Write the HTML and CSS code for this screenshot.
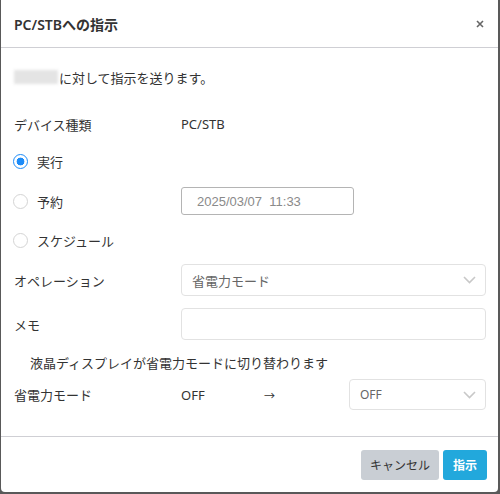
FILE: index.html
```html
<!DOCTYPE html>
<html lang="ja">
<head>
<meta charset="utf-8">
<link rel="stylesheet" href="styles.css">
</head>
<body>
<div class="modal">
  <div class="modal-header">
    <div class="modal-title">PC/STBへの指示</div>
    <button class="close" aria-label="閉じる">
      <svg width="8" height="8" viewBox="0 0 8 8"><path d="M1 1L7 7M7 1L1 7" stroke="#666" stroke-width="1.6" fill="none"/></svg>
    </button>
  </div>
  <div class="modal-body">
    <div class="row intro"><span class="blurred" aria-hidden="true"></span>に対して指示を送ります。</div>
    <div class="row device">
      <div class="label">デバイス種類</div>
      <div class="value">PC/STB</div>
    </div>
    <div class="row radio-row first">
      <label class="radio"><span class="dot checked"></span>実行</label>
    </div>
    <div class="row radio-row reserve">
      <label class="radio label"><span class="dot"></span>予約</label>
      <div class="datetime">2025/03/07&nbsp;&nbsp;11:33</div>
    </div>
    <div class="row radio-row schedule">
      <label class="radio"><span class="dot"></span>スケジュール</label>
    </div>
    <div class="row op">
      <div class="label">オペレーション</div>
      <div class="select wide">
        <span>省電力モード</span>
        <svg class="chev" width="13" height="8" viewBox="0 0 13 8"><path d="M1 1L6.5 6.5L12 1" stroke="#c8c8c8" stroke-width="1.6" fill="none"/></svg>
      </div>
    </div>
    <div class="row memo">
      <div class="label">メモ</div>
      <div class="input wide"></div>
    </div>
    <div class="row note">液晶ディスプレイが省電力モードに切り替わります</div>
    <div class="row power">
      <div class="label">省電力モード</div>
      <div class="cur">OFF</div>
      <div class="arrow">→</div>
      <div class="select small">
        <span>OFF</span>
        <svg class="chev" width="13" height="8" viewBox="0 0 13 8"><path d="M1 1L6.5 6.5L12 1" stroke="#c8c8c8" stroke-width="1.6" fill="none"/></svg>
      </div>
    </div>
  </div>
  <div class="modal-footer">
    <button class="btn cancel">キャンセル</button>
    <button class="btn primary">指示</button>
  </div>
</div>
</body>
</html>
```
FILE: styles.css
```css
html, body {
  margin: 0;
  padding: 0;
}
body {
  width: 500px;
  height: 494px;
  background: #595959;
  font-family: "Noto Sans", "Noto Sans CJK JP", sans-serif;
  font-size: 13px;
  color: #333;
  overflow: hidden;
}
.modal {
  margin-left: 1px;
  width: 497px;
  height: 492px;
  background: #fff;
  border-radius: 0 0 4px 4px;
  display: flex;
  flex-direction: column;
}
.modal-header {
  border-bottom: 1px solid #cfcfd4;
  display: flex;
  align-items: center;
  justify-content: space-between;
  padding: 0 12px 0 13px;
  box-sizing: border-box;
  height: 48px;
}
.modal-title {
  font-size: 14px;
  font-weight: 600;
  color: #333;
}
.close {
  border: none;
  background: none;
  padding: 0;
  width: 12px;
  height: 12px;
  display: flex;
  align-items: center;
  justify-content: center;
}
.modal-body {
  padding: 19px 11px 0 13px;
  flex: 1;
}
.row {
  display: flex;
  align-items: center;
}
.label {
  width: 167px;
  flex: none;
}
.intro { height: 20px; }
.blurred {
  display: inline-block;
  background: #e4e4e4;
  filter: blur(1.5px);
  width: 44px;
  height: 14px;
  margin-right: 1px;
}
.device { height: 20px; margin-top: 27px; }
.radio {
  display: flex;
  align-items: center;
}
.dot {
  width: 15px;
  height: 15px;
  box-sizing: border-box;
  border-radius: 50%;
  border: 1px solid #d4d4d4;
  margin-right: 9px;
  background: #fff;
  margin-left: -1px;
}
.dot.checked {
  border: 1.5px solid #1d8cf8;
  background: radial-gradient(circle, #1d8cf8 0 3.6px, #fff 4.2px);
}
.radio-row.first { height: 20px; margin-top: 17px; }
.radio-row.reserve { height: 28px; margin-top: 16px; }
.radio-row.schedule { height: 20px; margin-top: 15px; }
.datetime {
  width: 173px;
  height: 28px;
  box-sizing: border-box;
  border: 1px solid #b4b4b4;
  border-radius: 3px;
  padding-left: 15px;
  display: flex;
  align-items: center;
  font-family: "Liberation Sans", sans-serif;
  font-size: 13px;
  color: #8a8a8a;
}
.op { height: 32px; margin-top: 14px; }
.memo { height: 32px; margin-top: 12px; }
.select, .input {
  box-sizing: border-box;
  border: 1px solid #e2e2e2;
  border-radius: 4px;
  height: 32px;
  display: flex;
  align-items: center;
  justify-content: space-between;
  color: #666;
}
.wide { width: 305px; }
.select.wide { padding: 0 9px 0 10px; }
.note { height: 20px; margin-top: 12px; padding-left: 16px; }
.power { height: 31px; margin-top: 7px; }
.cur { width: 85px; }
.arrow { width: 83px; font-size: 11px; margin-left: -2px; margin-right: 2px; }
.select.small {
  width: 137px;
  height: 31px;
  padding: 0 9px 0 10px;
  font-size: 12px;
}
.modal-footer {
  border-top: 1px solid #cfcfd4;
  height: 56px;
  display: flex;
  justify-content: flex-end;
  align-items: flex-start;
  padding: 13px 11px 0 0;
  gap: 4px;
  box-sizing: border-box;
}
.btn {
  height: 30px;
  border: none;
  border-radius: 3px;
  font-family: "Noto Sans", "Noto Sans CJK JP", sans-serif;
  font-size: 12px;
  padding: 0;
}
.cancel {
  width: 78px;
  background: #c9ced4;
  color: #333;
}
.primary {
  width: 44px;
  background: #22a8dc;
  color: #fff;
  font-weight: 600;
}
```
